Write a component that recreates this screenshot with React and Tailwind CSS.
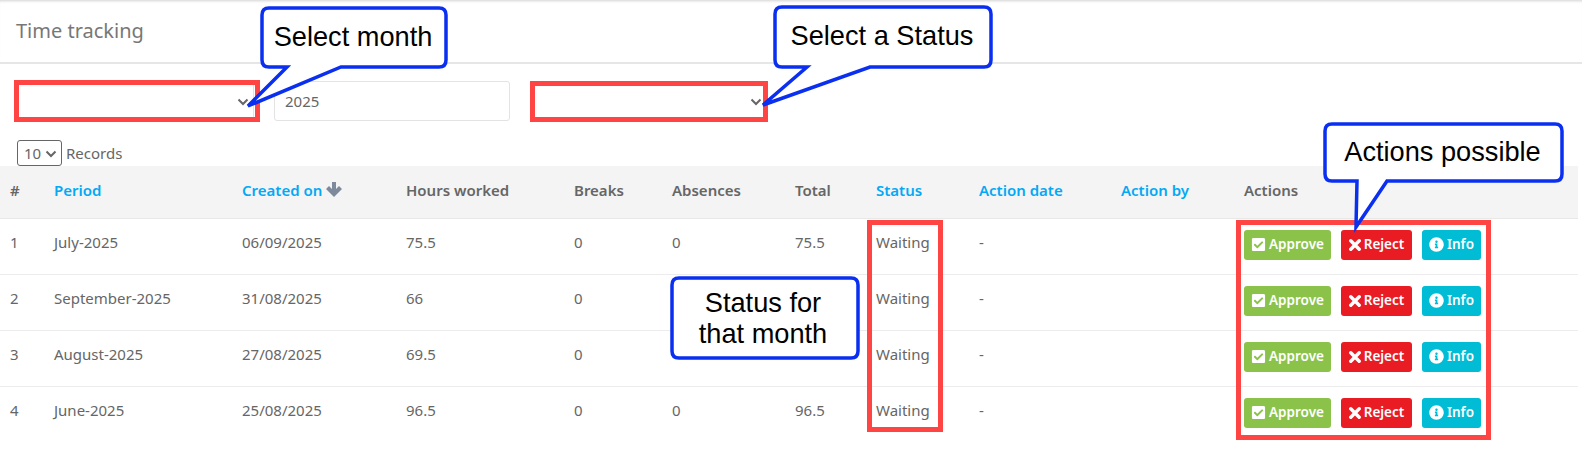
import { FaCheckSquare, FaInfoCircle } from 'react-icons/fa';

const columns = [
    { label: '#', width: 'w-[44px]' },
    { label: 'Period', width: 'w-[188px]', link: true },
    { label: 'Created on', width: 'w-[164px]', link: true, sorted: true },
    { label: 'Hours worked', width: 'w-[168px]' },
    { label: 'Breaks', width: 'w-[98px]' },
    { label: 'Absences', width: 'w-[123px]' },
    { label: 'Total', width: 'w-[81px]' },
    { label: 'Status', width: 'w-[103px]', link: true },
    { label: 'Action date', width: 'w-[142px]', link: true },
    { label: 'Action by', width: 'w-[123px]', link: true },
    { label: 'Actions', width: 'w-[344px]' },
];

// rows 2 and 3 have their absences and total covered by the callout in the picture
const rows = [
    { id: 1, period: 'July-2025', created: '06/09/2025', hours: '75.5', breaks: '0', absences: '0', total: '75.5' },
    { id: 2, period: 'September-2025', created: '31/08/2025', hours: '66', breaks: '0', absences: '', total: '' },
    { id: 3, period: 'August-2025', created: '27/08/2025', hours: '69.5', breaks: '0', absences: '', total: '' },
    { id: 4, period: 'June-2025', created: '25/08/2025', hours: '96.5', breaks: '0', absences: '0', total: '96.5' },
];

// rounded box with an optional tail, for the annotation balloons
function balloon(x, y, x2, y2, tail) {
    const r = 7;
    const bottom = tail
        ? `H${tail[2]} L${tail[1][0]},${tail[1][1]} L${tail[0]},${y2} H${x + r}`
        : `H${x + r}`;
    return `M${x + r},${y} H${x2 - r} Q${x2},${y} ${x2},${y + r} V${y2 - r} Q${x2},${y2} ${x2 - r},${y2} ${bottom} Q${x},${y2} ${x},${y2 - r} V${y + r} Q${x},${y} ${x + r},${y} Z`;
}

function Chevron({ className }) {
    return (
        <svg width="12" height="8" viewBox="0 0 12 8" className={`absolute right-[5px] pointer-events-none ${className}`}>
            <path d="M1.5 1.5 L6 6 L10.5 1.5" fill="none" stroke="#666" strokeWidth="2" />
        </svg>
    );
}

function ActionButton({ className, icon, label }) {
    return (
        <button className={`h-[30px] flex items-center justify-center gap-[3px] rounded-[3px] text-white text-[13.5px] font-semibold ${className}`}>
            {icon}
            {label}
        </button>
    );
}

export default function App() {
    return (
        <div className="relative w-[1582px] h-[453px] overflow-hidden bg-white text-[#666] text-[15px] font-['Noto_Sans',sans-serif]">
            <header className="h-[64px] flex items-center pl-[16px] pb-[1px] border-b-2 border-[#e6e6e6] shadow-[inset_0_3px_3px_-2px_rgba(0,0,0,0.18)]">
                <h1 className="text-[20px] text-[#777]">Time tracking</h1>
            </header>

            <div className="flex pl-[18px] pt-[17px] gap-[20px]">
                <div className="relative w-[236px] h-[40px]">
                    <select className="w-full h-full appearance-none bg-white border border-[#e3e3e3] rounded-[3px]" />
                    <Chevron className="top-[17px]" />
                </div>
                <input readOnly value="2025" className="w-[236px] h-[40px] px-[10px] border border-[#e3e3e3] rounded-[3px] outline-none text-[#666]" />
                <div className="relative w-[233px] h-[40px] ml-[4px]">
                    <select className="w-full h-full appearance-none bg-white border border-[#e3e3e3] rounded-[3px]" />
                    <Chevron className="top-[17px]" />
                </div>
            </div>

            <div className="flex items-center gap-[4px] pl-[17px] pt-[19px] h-[45px]">
                <div className="relative w-[45px] h-[26px]">
                    <select defaultValue="10" className="w-full h-full appearance-none pl-[6px] border border-[#666] rounded-[3px] text-[#666]">
                        <option value="10">10</option>
                        <option value="25">25</option>
                    </select>
                    <Chevron className="top-[10px]" />
                </div>
                <span>Records</span>
            </div>

            <table className="table-fixed w-[1578px] border-collapse">
                <colgroup>
                    {columns.map(col => <col key={col.label} className={col.width} />)}
                </colgroup>
                <thead>
                    <tr className="h-[52px] bg-[#f4f4f4] border-b border-[#e8e8e8]">
                        {columns.map(col => (
                            <th key={col.label} className={`pl-[10px] pb-[4px] text-left font-semibold ${col.link ? 'text-[#03a9f4]' : 'text-[#666]'}`}>
                                <span className="inline-flex items-center gap-[4px]">
                                    {col.label}
                                    {col.sorted && (
                                        <svg width="16" height="15" viewBox="0 0 16 15">
                                            <path d="M6 0h4v7l3-3 3 3-8 8-8-8 3-3 3 3z" fill="#7d8a9c" />
                                        </svg>
                                    )}
                                </span>
                            </th>
                        ))}
                    </tr>
                </thead>
                <tbody>
                    {rows.map(row => (
                        <tr key={row.id} className="h-[56px] align-top border-b border-[#ececec] last:border-b-0">
                            <td className="pl-[10px] pt-[12px]">{row.id}</td>
                            <td className="pl-[10px] pt-[12px]">{row.period}</td>
                            <td className="pl-[10px] pt-[12px]">{row.created}</td>
                            <td className="pl-[10px] pt-[12px]">{row.hours}</td>
                            <td className="pl-[10px] pt-[12px]">{row.breaks}</td>
                            <td className="pl-[10px] pt-[12px]">{row.absences}</td>
                            <td className="pl-[10px] pt-[12px]">{row.total}</td>
                            <td className="pl-[10px] pt-[12px]">Waiting</td>
                            <td className="pl-[10px] pt-[12px]">-</td>
                            <td className="pl-[10px] pt-[12px]"></td>
                            <td className="pl-[10px] pt-[11px]">
                                <div className="flex gap-[10px]">
                                    <ActionButton className="w-[87px] bg-[#8bc34a]" icon={<FaCheckSquare className="text-[15px]" />} label="Approve" />
                                    <ActionButton
                                        className="w-[71px] bg-[#e91c24]"
                                        icon={
                                            <svg width="12" height="12" viewBox="0 0 12 12">
                                                <path d="M1.8 1.8 L10.2 10.2 M10.2 1.8 L1.8 10.2" stroke="#fff" strokeWidth="3.4" strokeLinecap="round" />
                                            </svg>
                                        }
                                        label="Reject"
                                    />
                                    <ActionButton className="w-[59px] bg-[#00bcd4]" icon={<FaInfoCircle className="text-[15px]" />} label="Info" />
                                </div>
                            </td>
                        </tr>
                    ))}
                </tbody>
            </table>

            {/* Red highlight boxes drawn over the screen */}
            <div className="absolute left-[14px] top-[80px] w-[246px] h-[42px] border-[5px] border-[#ff4444]" />
            <div className="absolute left-[530px] top-[81px] w-[238px] h-[41px] border-[5px] border-[#ff4444]" />
            <div className="absolute left-[867px] top-[220px] w-[76px] h-[212px] border-[5px] border-[#ff4444]" />
            <div className="absolute left-[1236px] top-[220px] w-[255px] h-[220px] border-[5px] border-[#ff4444]" />

            {/* Callouts */}
            <svg className="absolute left-0 top-0" width="1582" height="453">
                <g fill="#fff" stroke="#0a2ff0" strokeWidth="3.5">
                    <path d={balloon(262, 8, 446, 67, [287, [248, 106], 341])} />
                    <path d={balloon(775, 7, 991, 67, [807, [763, 105], 870])} />
                    <path d={balloon(1325, 124, 1562, 181, [1357, [1356, 227], 1387])} />
                    <path d={balloon(672, 278, 858, 358)} />
                </g>
            </svg>
            <div className="absolute left-[260px] top-[7px] w-[186px] h-[60px] flex items-center justify-center text-black text-[27.2px] font-['Liberation_Sans',sans-serif]">Select month</div>
            <div className="absolute left-[774px] top-[6px] w-[216px] h-[60px] flex items-center justify-center text-black text-[27.2px] font-['Liberation_Sans',sans-serif]">Select a Status</div>
            <div className="absolute left-[1324px] top-[123px] w-[237px] h-[58px] flex items-center justify-center text-black text-[27.2px] font-['Liberation_Sans',sans-serif]">Actions possible</div>
            <div className="absolute left-[670px] top-[278px] w-[186px] h-[80px] flex items-center justify-center text-center text-black text-[27.2px] leading-[31px] font-['Liberation_Sans',sans-serif]">Status for<br />that month</div>
        </div>
    );
}
